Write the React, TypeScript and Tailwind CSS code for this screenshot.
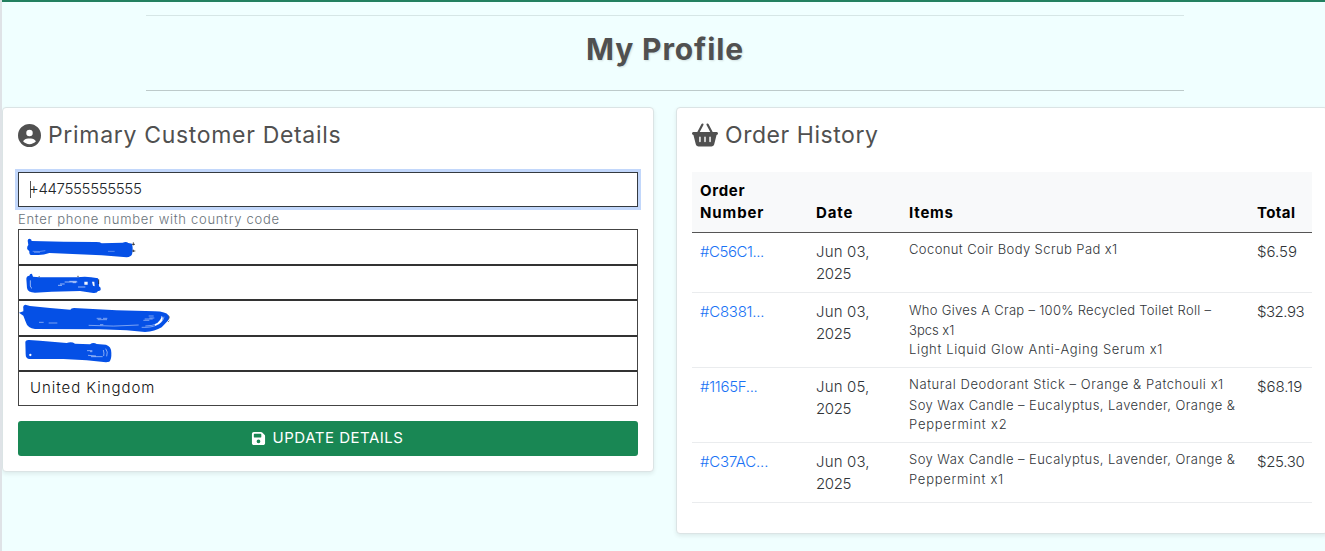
import React from "react";
import { FaCircleUser, FaBasketShopping, FaFloppyDisk } from "react-icons/fa6";

type Line = { text: string; className: string };
type Order = { id: string; idClass: string; month: string; total: string; totalClass: string; height: string; items: Line[] };

const orders: Order[] = [
  {
    id: "#C56C1...", idClass: "tracking-[-0.45px]", month: "Jun 03,", total: "$6.59", totalClass: "tracking-[0px]", height: "h-[60px]",
    items: [{ text: "Coconut Coir Body Scrub Pad x1", className: "h-[20px] tracking-[0.4px]" }],
  },
  {
    id: "#C8381...", idClass: "tracking-[-0.25px]", month: "Jun 03,", total: "$32.93", totalClass: "tracking-[-0.5px]", height: "h-[75px]",
    items: [
      { text: "Who Gives A Crap – 100% Recycled Toilet Roll –", className: "mt-px h-[20px] tracking-[0.3px]" },
      { text: "3pcs x1", className: "h-[19px] tracking-[0px]" },
      { text: "Light Liquid Glow Anti-Aging Serum x1", className: "h-[19px] tracking-[0.63px]" },
    ],
  },
  {
    id: "#1165F...", idClass: "tracking-[-0.3px]", month: "Jun 05,", total: "$68.19", totalClass: "tracking-[0px]", height: "h-[75px]",
    items: [
      { text: "Natural Deodorant Stick – Orange & Patchouli x1", className: "h-[21px] tracking-[0.56px]" },
      { text: "Soy Wax Candle – Eucalyptus, Lavender, Orange &", className: "h-[19px] tracking-[0.44px]" },
      { text: "Peppermint x2", className: "h-[20px] tracking-[0.8px]" },
    ],
  },
  {
    id: "#C37AC...", idClass: "tracking-[-0.15px]", month: "Jun 03,", total: "$25.30", totalClass: "tracking-[-0.3px]", height: "h-[60px]",
    items: [
      { text: "Soy Wax Candle – Eucalyptus, Lavender, Orange &", className: "h-[20px] tracking-[0.44px]" },
      { text: "Peppermint x1", className: "h-[20px] tracking-[0.75px]" },
    ],
  },
];

const scribbles = [
  {
    viewBox: "-3 -18 480 99",
    rowHeight: "h-[36px]",
    drawing: (
      <>
        <path d="M23 14 Q23 8 29 8 Q35 9 35 15 L132 17 L224 18 Q240 17 245 22 L308 20 Q319 16 325 21 L336 23 Q340 40 336 55 Q333 63 320 64 L245 58 L88 51 Q70 58 50 57 L32 57 Q27 54 28 46 L22 40 Q20 32 25 27Z" />
        <path d="M38 46 q22 2 38-2 M264 46h20 M42 49h18" fill="none" stroke="#c8d8ff" strokeWidth="1.3" />
        <path d="M336 25h9 M340 19v9 M337 45h9 M340 41v7" fill="none" stroke="#222" strokeWidth="2.4" />
      </>
    ),
  },
  {
    viewBox: "-3 90 480 99",
    rowHeight: "h-[35.3px]",
    drawing: (
      <>
        <path d="M19 128 Q20 119 28 119 Q30 112 36 114 L39 122 L58 124 L172 124 Q200 119 234 127 Q238 138 237 151 Q244 155 242 162 Q238 166 234 165 Q232 172 220 171 L180 165 L95 167 L45 170 Q23 170 21 156Z" />
        <path d="M56 122h3 M172 121h4 M236 130v14" fill="none" stroke="#222" strokeWidth="2.4" />
        <path d="M31 133 v17 q1 5 5 7 M134 138h38 M148 136h22 M114 148h12 M120 144h14 M174 153h22 M158 140h10" fill="none" stroke="#e0e9ff" strokeWidth="2" />
        <path d="M193 137h10v9h-10z M216 137l7 0 1 14-5-2z" fill="#f4f7ff" />
      </>
    ),
  },
  {
    viewBox: "-3 196 480 99",
    rowHeight: "h-[35.3px]",
    drawing: (
      <>
        <path d="M-3 231 L10 227 L10 219 Q8 208 16 207 L30 211 L90 217 L151 222 Q153 217 162 217 L290 224 L405 227 Q438 228 445 239 Q450 247 443 256 L425 275 Q405 287 375 289 L320 284 L240 281 L45 280 Q22 277 17 258 L10 240Z" />
        <path d="M230 248h14 M249 248h13 M233 252h28 M240 267h10 M206 269 q75 5 150-1 M365 275 q28 1 43-6 q22-9 24-26 M376 271 q22 0 35-7 M386 241h15 M374 250h24 M370 254h18 M388 247h15 M57 260h14 M86 262h26" fill="none" stroke="#dfe8ff" strokeWidth="1.6" />
        <path d="M405 266 Q424 255 425 240 Q432 247 424 259 Q417 267 405 270Z" fill="#fff" />
        <path d="M444 240 q7 2 3 8 l-3 4 M444 259 l4-4" fill="none" stroke="#333" strokeWidth="1.8" />
      </>
    ),
  },
  {
    viewBox: "-3 303 480 99",
    rowHeight: "h-[35.3px]",
    drawing: (
      <>
        <path d="M16 317 Q18 311 27 312 L60 314 L140 321 Q155 316 165 323 L210 325 Q220 317 230 324 L258 326 Q274 331 274 350 Q275 370 268 377 L258 379 L200 373 L130 369 L27 369 Q17 368 17 355Z" />
        <path d="M201 344h16 M210 347h7 M204 358 l24 2 M213 362h35 M257 338 q8 9 3 23 M250 342 q3 10 1 18" fill="none" stroke="#dfe8ff" strokeWidth="1.8" />
        <circle cx="31" cy="357" r="3.5" fill="#fff" />
      </>
    ),
  },
];

function CustomerDetails() {
  return (
    <section className="h-[365px] w-[652px] shrink-0 rounded border border-[#dbe4e5] bg-white px-[15px] pt-[13px] shadow-[0_2px_4px_rgba(0,0,0,0.08)]">
      <h2 className="flex h-[28px] items-center text-[23px] font-normal whitespace-nowrap text-[#505050]">
        <FaCircleUser className="mr-[7px] size-[23px] shrink-0" />
        <span className="tracking-[0.68px]">Primary Customer Details</span>
      </h2>
      <div className="mt-[23px] flex h-[35px] items-center border border-[#343a40] pl-[11px] text-[15px] font-light text-[#212529] shadow-[0_0_0_3px_#c2d7fb]">
        <span className="mr-[-2px] h-[17px] w-px bg-[#555]" />
        <span className="tracking-[-0.35px]">+447555555555</span>
      </div>
      <p className="h-[22px] pt-[2px] text-[13px] leading-[20px] font-light text-[#69727a]">
        <span className="tracking-[0.7px]">Enter phone number with country code</span>
      </p>
      <div className="divide-y-2 divide-[#333] border border-[#444]">
        {scribbles.map(({ viewBox, rowHeight, drawing }) => (
          <div key={viewBox} className={rowHeight}>
            <svg className="block h-[33px] w-[160px] overflow-visible" viewBox={viewBox} fill="#0550e6">
              {drawing}
            </svg>
          </div>
        ))}
        <div className="flex h-[33px] items-center pl-[11px] text-[15px] font-light text-[#111]">
          <span className="tracking-[0.95px]">United Kingdom</span>
        </div>
      </div>
      <button className="mt-[15px] flex h-[35px] w-full items-center justify-center gap-[7px] rounded-[3px] bg-[#198754] pr-[2px] text-[15px] text-white">
        <FaFloppyDisk className="size-[15px]" />
        <span className="tracking-[0.5px]">UPDATE DETAILS</span>
      </button>
    </section>
  );
}

function OrderHistory() {
  return (
    <section className="h-[427px] w-[652px] shrink-0 rounded border border-[#dbe4e5] bg-white px-[15px] pt-[13px] shadow-[0_2px_4px_rgba(0,0,0,0.08)]">
      <h2 className="flex h-[28px] items-center text-[23px] font-normal whitespace-nowrap text-[#505050]">
        <FaBasketShopping className="mr-[7px] size-[26px] shrink-0" />
        <span className="tracking-[0.55px]">Order History</span>
      </h2>
      <table className="mt-[23px] w-[620px] table-fixed border-separate border-spacing-0 text-left text-[15px] leading-[22px] whitespace-nowrap text-[#303438]">
        <colgroup>
          <col className="w-[116px]" />
          <col className="w-[93px]" />
          <col className="w-[348px]" />
          <col className="w-[63px]" />
        </colgroup>
        <thead className="bg-[#f8f9fa] text-black">
          <tr className="h-[61px] *:border-b *:border-[#555] *:px-[8px] *:pb-[8px] *:align-bottom *:font-bold">
            <th><span className="tracking-[0.7px]">Order</span><br /><span className="tracking-[0.9px]">Number</span></th>
            <th><span className="tracking-[0.9px]">Date</span></th>
            <th><span className="tracking-[0.8px]">Items</span></th>
            <th><span className="tracking-[0.4px]">Total</span></th>
          </tr>
        </thead>
        <tbody className="font-light">
          {orders.map((order) => (
            <tr key={order.id} className={`${order.height} *:border-b *:border-[#eaecee] *:px-[8px] *:pt-[8px] *:align-top`}>
              <td><a className={`text-[#1a73f5] ${order.idClass}`}>{order.id}</a></td>
              <td><span className="tracking-[0.15px]">{order.month}</span><br /><span className="tracking-[-0.4px]">2025</span></td>
              <td>
                <ul className="-mt-px text-[13px] leading-[19px]">
                  {order.items.map((item) => (
                    <li key={item.text} className={item.className}><span>{item.text}</span></li>
                  ))}
                </ul>
              </td>
              <td><span className={order.totalClass}>{order.total}</span></td>
            </tr>
          ))}
        </tbody>
      </table>
    </section>
  );
}

export default function App() {
  return (
    <main className="h-[551px] overflow-hidden border-l-2 border-[#dfe3e7] bg-[#f0ffff] font-['Inter','Liberation_Sans',sans-serif]">
      <div className="h-[2px] bg-[#238060]" />
      <header className="mt-[13px] ml-[144px] flex h-[76px] w-[1038px] items-center justify-center border-t border-b border-t-[#d6e6e6] border-b-[#bdcaca] pb-[7px]">
        <h1 className="text-[30px] font-bold text-[#505050] [text-shadow:1px_1px_2px_rgba(0,0,0,0.12)]">
          <span className="tracking-[0.9px]">My Profile</span>
        </h1>
      </header>
      <div className="mt-[16px] flex items-start gap-[22px]">
        <CustomerDetails />
        <OrderHistory />
      </div>
    </main>
  );
}
